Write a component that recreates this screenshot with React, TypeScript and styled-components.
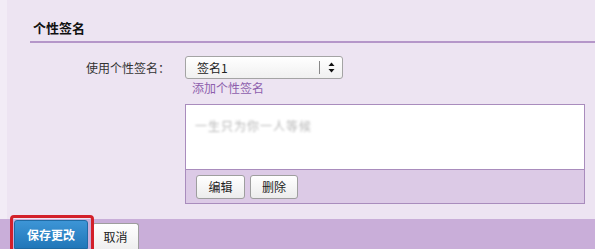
import React from "react";
import styled, { createGlobalStyle } from "styled-components";

const Global = createGlobalStyle`
  html, body { margin: 0; padding: 0; }
  body {
    background: #ede4f2;
    font-family: "Noto Sans CJK SC", "Liberation Sans", sans-serif;
    font-size: 12px;
    color: #333;
    width: 595px;
    height: 249px;
    overflow: hidden;
  }
`;

const Page = styled.div`
  display: flex;
  flex-direction: column;
  height: 249px;
  padding-left: 7px;
  background: #f2ecf6;
  box-sizing: border-box;
`;

const Panel = styled.div`
  flex: 1;
  background: #ede4f2;
  padding: 17px 0 0 23px;
  display: flex;
  flex-direction: column;
`;

const Heading = styled.h2`
  margin: 0;
  font-size: 13px;
  font-weight: bold;
  color: #111;
  line-height: 22px;
  padding: 0 0 2px 3px;
  border-bottom: 2px solid #b596c9;
`;

const FormRow = styled.div`
  display: grid;
  grid-template-columns: 155px 1fr;
  column-gap: 0;
  margin-top: 13px;
`;

const Label = styled.div`
  text-align: right;
  padding-right: 15px;
  line-height: 23px;
  color: #333;
`;

const Controls = styled.div`
  display: flex;
  flex-direction: column;
  align-items: flex-start;
`;

const Select = styled.div`
  width: 156px;
  height: 21px;
  border: 1px solid #a4a4a4;
  border-radius: 3px;
  background: linear-gradient(#ffffff, #f0f0f0);
  display: flex;
  align-items: center;
  box-sizing: content-box;
`;

const SelectText = styled.span`
  flex: 1;
  padding-left: 11px;
  color: #222;
`;

const SelectSep = styled.span`
  width: 1px;
  height: 13px;
  background: #888;
`;

const SelectArrow = styled.span`
  width: 22px;
  display: flex;
  justify-content: center;
  align-items: center;
`;

const AddLink = styled.a`
  color: #8e5fad;
  text-decoration: none;
  line-height: 20px;
  padding-left: 7px;
  margin-top: -1px;
`;

const Box = styled.div`
  margin-top: 6px;
  width: 398px;
  border: 1px solid #a98cbd;
  display: flex;
  flex-direction: column;
`;

const BoxBody = styled.div`
  height: 64px;
  background: #fff;
  padding: 12px 0 0 9px;
  box-sizing: border-box;
`;

const Blurred = styled.span`
  color: #b9b9b9;
  filter: blur(1.2px);
  font-size: 12px;
  letter-spacing: 1px;
`;

const BoxBar = styled.div`
  height: 34px;
  border-top: 1px solid #a98cbd;
  background: #dccae6;
  display: flex;
  align-items: center;
  gap: 5px;
  padding-left: 10px;
  box-sizing: border-box;
`;

const Btn = styled.button`
  font-family: inherit;
  font-size: 12px;
  color: #222;
  height: 24px;
  width: ${(p: { w: number }) => p.w}px;
  border: 1px solid #9e9e9e;
  border-radius: 3px;
  background: linear-gradient(#ffffff, #ececec);
  padding: 0;
`;

const Footer = styled.div`
  height: 30px;
  background: #c9aed9;
  margin-left: -7px;
  display: flex;
  align-items: flex-end;
  gap: 4px;
  padding-left: 14px;
  position: relative;
`;

const Highlight = styled.div`
  position: absolute;
  left: 10px;
  top: -4px;
  width: 78px;
  height: 40px;
  border: 3px solid #d3202a;
  border-radius: 4px;
  pointer-events: none;
`;

const PrimaryBtn = styled.button`
  font-family: inherit;
  font-size: 12px;
  font-weight: bold;
  color: #fff;
  width: 74px;
  height: 29px;
  border: 1px solid #1f6aa3;
  border-radius: 3px 3px 0 0;
  background: linear-gradient(#3d95d6, #2177b9);
  padding: 0;
`;

const CancelBtn = styled.button`
  font-family: inherit;
  font-size: 12px;
  color: #222;
  width: 47px;
  height: 26px;
  border: 1px solid #9e9e9e;
  border-bottom: none;
  border-radius: 3px 3px 0 0;
  background: linear-gradient(#ffffff, #efefef);
  padding: 0;
`;

export default function App() {
  return (
    <>
      <Global />
      <Page>
        <Panel>
          <Heading>个性签名</Heading>
          <FormRow>
            <Label>使用个性签名：</Label>
            <Controls>
              <Select>
                <SelectText>签名1</SelectText>
                <SelectSep />
                <SelectArrow>
                  <svg width="7" height="11" viewBox="0 0 7 11">
                    <path d="M3.5 0.5 L6.5 4 L0.5 4 Z" fill="#111" />
                    <path d="M3.5 10.5 L6.5 7 L0.5 7 Z" fill="#111" />
                  </svg>
                </SelectArrow>
              </Select>
              <AddLink href="#">添加个性签名</AddLink>
              <Box>
                <BoxBody>
                  <Blurred>一生只为你一人等候</Blurred>
                </BoxBody>
                <BoxBar>
                  <Btn w={49}>编辑</Btn>
                  <Btn w={48}>删除</Btn>
                </BoxBar>
              </Box>
            </Controls>
          </FormRow>
        </Panel>
        <Footer>
          <Highlight />
          <PrimaryBtn>保存更改</PrimaryBtn>
          <CancelBtn>取消</CancelBtn>
        </Footer>
      </Page>
    </>
  );
}
